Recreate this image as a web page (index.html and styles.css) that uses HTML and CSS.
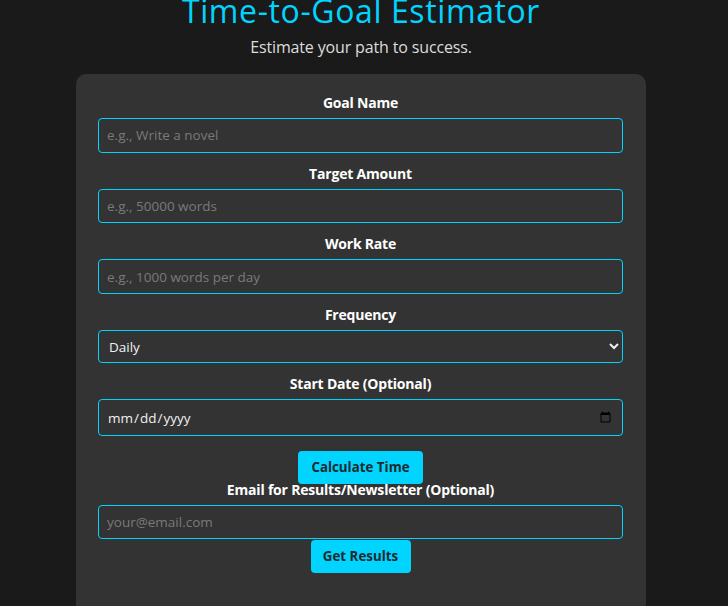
FILE: index.html
```html
<!DOCTYPE html>
<html lang="en">
<head>
<meta charset="utf-8">
<title>Time-to-Goal Estimator</title>
<link rel="stylesheet" href="styles.css">
</head>
<body>
<div class="page">
  <h1 class="title">Time-to-Goal Estimator</h1>
  <p class="subtitle">Estimate your path to success.</p>
  <div class="card">
    <div class="group">
      <label class="label" for="goal">Goal Name</label>
      <input class="field" id="goal" type="text" placeholder="e.g., Write a novel">
    </div>
    <div class="group">
      <label class="label" for="target">Target Amount</label>
      <input class="field" id="target" type="text" placeholder="e.g., 50000 words">
    </div>
    <div class="group">
      <label class="label" for="rate">Work Rate</label>
      <input class="field" id="rate" type="text" placeholder="e.g., 1000 words per day">
    </div>
    <div class="group">
      <label class="label" for="freq">Frequency</label>
      <select class="field select" id="freq">
        <option>Daily</option>
        <option>Weekly</option>
        <option>Monthly</option>
      </select>
    </div>
    <div class="group">
      <label class="label" for="start">Start Date (Optional)</label>
      <input class="field date" id="start" type="date">
    </div>
    <div class="btn-row first">
      <button class="btn" type="button">Calculate Time</button>
    </div>
    <div class="group">
      <label class="label" for="email">Email for Results/Newsletter (Optional)</label>
      <input class="field email" id="email" type="email" placeholder="your@email.com">
    </div>
    <div class="btn-row second">
      <button class="btn" type="button">Get Results</button>
    </div>
  </div>
</div>
</body>
</html>
```
FILE: styles.css
```css
* { box-sizing: border-box; }

html, body {
  margin: 0;
  background: #1a1a1a;
  color: #f0f0f0;
  font-family: "Open Sans", "DejaVu Sans", sans-serif;
}

.page {
  display: flex;
  flex-direction: column;
  align-items: center;
  padding-right: 6px;
}

.title {
  margin: -5.5px 0 0;
  font-size: 32px;
  line-height: 32px;
  font-weight: 400;
  letter-spacing: 0.6px;
  color: #00d4ff;
}

.subtitle {
  margin: 8.5px 0 0;
  font-size: 16px;
  line-height: 24px;
  letter-spacing: -0.15px;
  color: #dcdcdc;
}

.card {
  margin-top: 15px;
  width: 570px;
  height: 560px;
  background: #333333;
  border-radius: 10px;
  padding: 19px 23px 0 22px;
  display: flex;
  flex-direction: column;
}

.group {
  display: flex;
  flex-direction: column;
  margin-bottom: 11px;
}

.label {
  display: block;
  text-align: center;
  font-size: 14px;
  line-height: 20px;
  font-weight: 700;
  letter-spacing: -0.2px;
  color: #ffffff;
  margin-bottom: 5px;
}

.field {
  width: 100%;
  height: 34.67px;
  padding: 6px 8px;
  font-family: inherit;
  font-size: 13.5px;
  line-height: 20.67px;
  color: #f0f0f0;
  background: #333333;
  border: 1px solid #00d4ff;
  border-radius: 4px;
  outline: none;
}

.field::placeholder {
  color: #7a7a7a;
}

.select {
  height: 33.5px;
  padding: 0 6px;
}

.date {
  height: 37px;
}

.email {
  height: 34px;
}

.btn-row {
  display: flex;
  justify-content: center;
}

.btn-row.first {
  margin-top: 3.5px;
  margin-bottom: -4px;
  position: relative;
  z-index: 1;
}

.btn-row.second {
  margin-top: -10px;
}

.btn {
  height: 33px;
  padding: 0;
  white-space: nowrap;
  font-family: inherit;
  font-size: 13.33px;
  font-weight: 700;
  color: #1f2a2e;
  background: #00d4ff;
  border: none;
  border-radius: 4px;
}

.btn-row.first .btn { width: 125px; }
.btn-row.second .btn { width: 100px; }
```
